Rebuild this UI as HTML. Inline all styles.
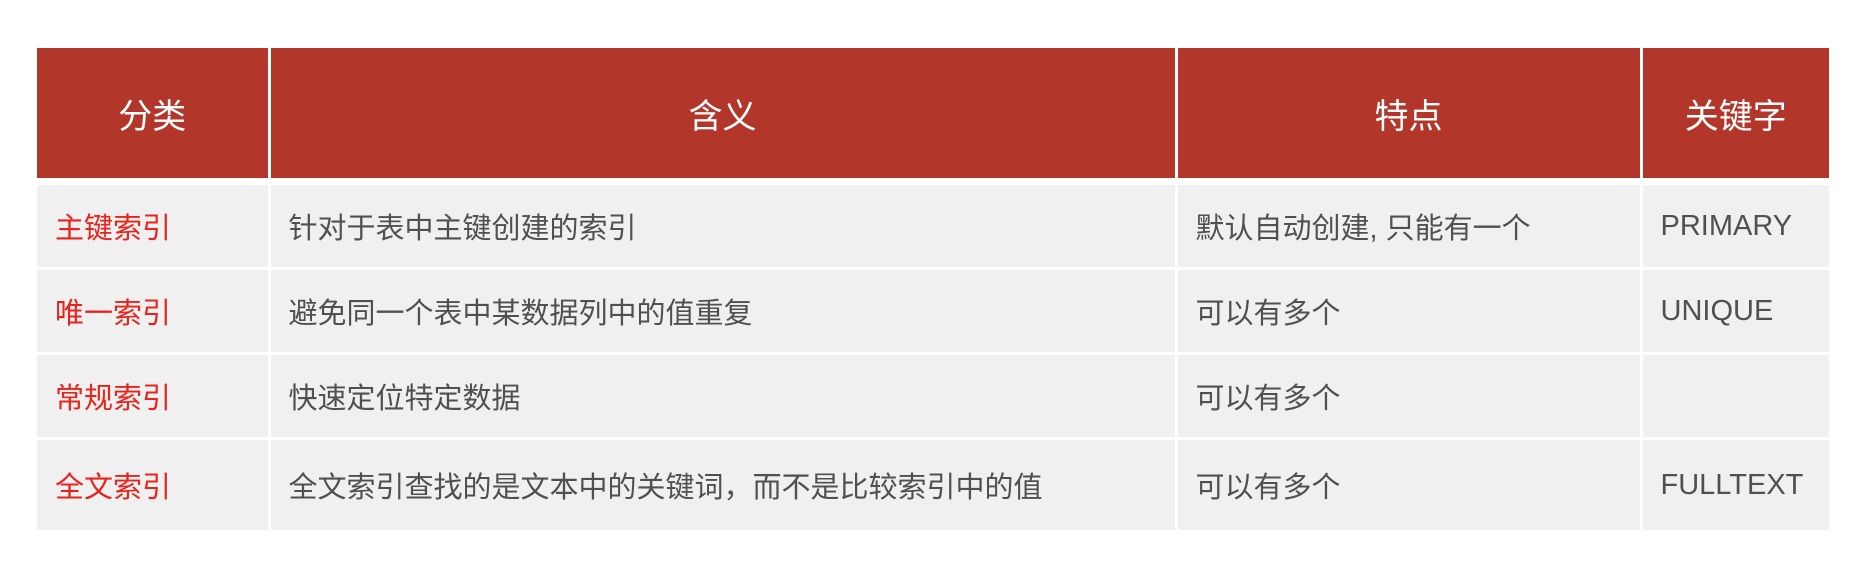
<!DOCTYPE html>
<html><head><meta charset="utf-8"><style>
html,body{margin:0;padding:0;background:#fff;width:1864px;height:583px;overflow:hidden}
table{position:absolute;left:37px;top:48px;border-collapse:collapse;font-family:"Liberation Sans","Noto Sans CJK SC",sans-serif;font-size:29px}
th{background:#b3362a;color:#fff;font-weight:normal;height:130px;text-align:center;border-left:3px solid #fff;padding:0;font-size:34px}
th:first-child{border-left:none}
td{background:#f0f0f0;color:#505050;height:82px;border-left:3px solid #fff;border-top:3px solid #fff;padding:0 0 0 18px;vertical-align:middle}
td:first-child{border-left:none;color:#e8231b}
tr.first td{border-top:7px solid #fff}
</style></head><body>
<table>
<colgroup><col style="width:232px"><col style="width:907px"><col style="width:465px"><col style="width:188px"></colgroup>
<tr><th>分类</th><th>含义</th><th>特点</th><th>关键字</th></tr>
<tr class="first"><td>主键索引</td><td>针对于表中主键创建的索引</td><td>默认自动创建, 只能有一个</td><td>PRIMARY</td></tr>
<tr><td>唯一索引</td><td>避免同一个表中某数据列中的值重复</td><td>可以有多个</td><td>UNIQUE</td></tr>
<tr><td>常规索引</td><td>快速定位特定数据</td><td>可以有多个</td><td></td></tr>
<tr><td style="height:90px">全文索引</td><td>全文索引查找的是文本中的关键词，而不是比较索引中的值</td><td>可以有多个</td><td>FULLTEXT</td></tr>
</table>
</body></html>
